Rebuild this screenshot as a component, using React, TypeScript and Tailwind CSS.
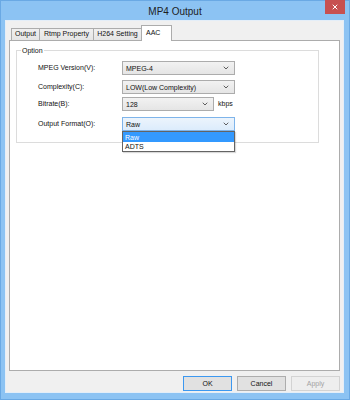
import { X, ChevronDown } from 'lucide-react'

const font = { fontFamily: '"Liberation Sans", Arial, sans-serif' }

function Combo({ value, width = 'w-[113px]', focused = false }: { value: string; width?: string; focused?: boolean }) {
  return (
    <div
      className={`${width} h-[14px] flex items-center justify-between pl-[3px] pr-[4px] border ${
        focused
          ? 'border-[#7eb4ea] bg-gradient-to-b from-[#ecf4fc] to-[#dcecfc]'
          : 'border-[#acacac] bg-gradient-to-b from-[#f2f2f2] to-[#e5e5e5]'
      }`}
    >
      <span className="leading-none">{value}</span>
      <ChevronDown className="w-[8px] h-[8px] text-[#404040]" strokeWidth={2.5} />
    </div>
  )
}

export default function App() {
  return (
    <div className="w-[350px] h-[400px] bg-[#8cc3f3] border border-[#6aa9e4] text-[7px] text-[#111] flex flex-col whitespace-nowrap" style={font}>
      {/* title bar */}
      <div className="relative h-[19px] flex items-center justify-center shrink-0">
        <span className="text-[10px] text-[#1e1e1e] mt-[1px]">MP4 Output</span>
        <div className="absolute right-[4px] -top-px w-[20px] h-[14px] bg-[#c75050] flex items-center justify-center">
          <X className="w-[8px] h-[8px] text-white" strokeWidth={3} />
        </div>
      </div>

      {/* body */}
      <div className="ml-[4px] mr-[5px] mb-[6px] flex-1 bg-[#f0f0f0] border border-[#e4eef8] flex flex-col px-[3px] pt-[4px]">
        {/* tabs */}
        <div className="flex items-end pl-[2px] h-[15px]">
          <div className="w-[29px] h-[12px] border border-b-0 border-[#acacac] bg-gradient-to-b from-[#f0f0f0] to-[#e5e5e5] flex items-center justify-center">Output</div>
          <div className="w-[55px] h-[12px] -ml-px border border-b-0 border-[#acacac] bg-gradient-to-b from-[#f0f0f0] to-[#e5e5e5] flex items-center justify-center">Rtmp Property</div>
          <div className="w-[49px] h-[12px] -ml-px border border-b-0 border-[#acacac] bg-gradient-to-b from-[#f0f0f0] to-[#e5e5e5] flex items-center justify-center">H264 Setting</div>
          <div className="relative z-10 w-[31px] h-[16px] -ml-px -mb-px border border-b-0 border-[#acacac] bg-white flex items-start pl-[4px] pt-[2px]">AAC</div>
        </div>

        {/* panel */}
        <div className="h-[331px] bg-white border border-[#acacac] px-[6px] pt-[6px]">
          <fieldset className="border border-[#dcdcdc] w-[303px] h-[96px] px-[3px]">
            <legend className="ml-[1px] px-[1px] leading-none">Option</legend>

            <div className="pl-[18px]">
              <div className="mt-[7px] flex items-center h-[14px]">
                <span className="w-[84px]">MPEG Version(V):</span>
                <Combo value="MPEG-4" />
              </div>
              <div className="mt-[5px] flex items-center h-[14px]">
                <span className="w-[84px]">Complexity(C):</span>
                <Combo value="LOW(Low Complexity)" />
              </div>
              <div className="mt-[3px] flex items-center h-[14px]">
                <span className="w-[84px]">Bitrate(B):</span>
                <Combo value="128" width="w-[92px]" />
                <span className="ml-[4px]">kbps</span>
              </div>
              <div className="mt-[6px] flex items-center h-[14px] relative">
                <span className="w-[84px]">Output Format(O):</span>
                <Combo value="Raw" focused />
                <div className="absolute left-[84px] top-[14px] w-[113px] border border-[#646464] bg-white z-20 shadow-[1px_1px_1px_rgba(0,0,0,0.15)]">
                  <div className="h-[10px] bg-[#3399ff] text-white pl-[2px] flex items-center leading-none">Raw</div>
                  <div className="h-[9px] pl-[2px] flex items-center leading-none">ADTS</div>
                </div>
              </div>
            </div>
          </fieldset>
        </div>

        {/* buttons */}
        <div className="flex justify-end gap-[5px] mt-[5px]">
          <button className="w-[49px] h-[15px] border border-[#3c98f0] bg-[#e1e1e1] leading-none">OK</button>
          <button className="w-[49px] h-[15px] border border-[#adadad] bg-[#e1e1e1] leading-none">Cancel</button>
          <button className="w-[49px] h-[15px] border border-[#d3d3d3] bg-[#eeeeee] text-[#a3a3a3] leading-none">Apply</button>
        </div>
      </div>
    </div>
  )
}
